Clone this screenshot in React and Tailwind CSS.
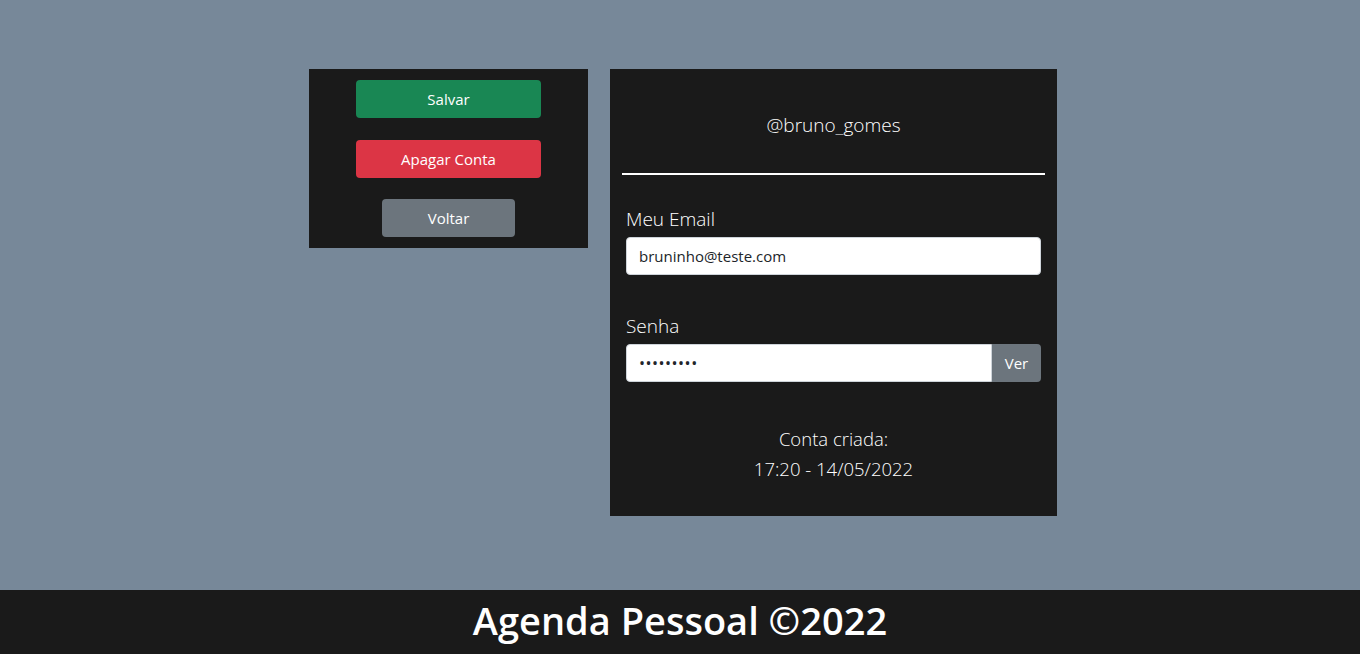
import React, { useState } from "react";

const font = { fontFamily: '"Open Sans", "Noto Sans", sans-serif' };

export default function App() {
  const [show, setShow] = useState(false);

  return (
    <div className="min-h-screen flex flex-col bg-[#778899]" style={font}>
      <main className="h-[590px] flex justify-center items-start gap-[22px] pt-[69px] pl-[6px]">
        <div className="w-[279px] bg-[#1a1a1a] flex flex-col items-center pt-[11px] pb-[11px]">
          <button className="w-[185px] h-[38px] rounded bg-[#198754] text-white text-[15px]">Salvar</button>
          <button className="w-[185px] h-[38px] rounded bg-[#dc3545] text-white text-[15px] mt-[22px]">Apagar Conta</button>
          <button className="w-[133px] h-[38px] rounded bg-[#6c757d] text-white text-[15px] mt-[21px]">Voltar</button>
        </div>

        <div className="w-[447px] bg-[#1a1a1a] px-3 pb-[32px] text-white">
          <div className="mt-[41px] text-center text-[19px] font-light leading-[30px]">@bruno_gomes</div>
          <div className="mt-[33px] h-[2px] bg-white" />

          <div className="mx-1">
            <div className="mt-[29px] mb-[3px] text-[19px] font-light leading-[30px]">Meu Email</div>
            <input
              type="email"
              defaultValue="bruninho@teste.com"
              className="w-full h-[38px] rounded border border-[#ced4da] bg-white px-3 text-[15px] text-[#212529] outline-none"
            />

            <div className="mt-[36px] mb-[3px] text-[19px] font-light leading-[30px]">Senha</div>
            <div className="flex h-[38px]">
              <input
                type={show ? "text" : "password"}
                defaultValue="123456789"
                className="flex-1 min-w-0 rounded-l border border-[#ced4da] bg-white px-3 text-[16px] tracking-[0.5px] text-[#212529] outline-none"
              />
              <button
                onClick={() => setShow(!show)}
                className="w-[49px] rounded-r bg-[#6c757d] text-white text-[15px]"
              >
                Ver
              </button>
            </div>
          </div>

          <div className="mt-[42px] text-center text-[18.5px] font-light leading-[30px]">
            <p>Conta criada:</p>
            <p>17:20 - 14/05/2022</p>
          </div>
        </div>
      </main>

      <footer className="h-[64px] bg-[#1a1a1a] flex items-center justify-center pb-[4px]">
        <h1 className="text-white text-[38px] font-semibold leading-none">Agenda Pessoal ©2022</h1>
      </footer>
    </div>
  );
}
